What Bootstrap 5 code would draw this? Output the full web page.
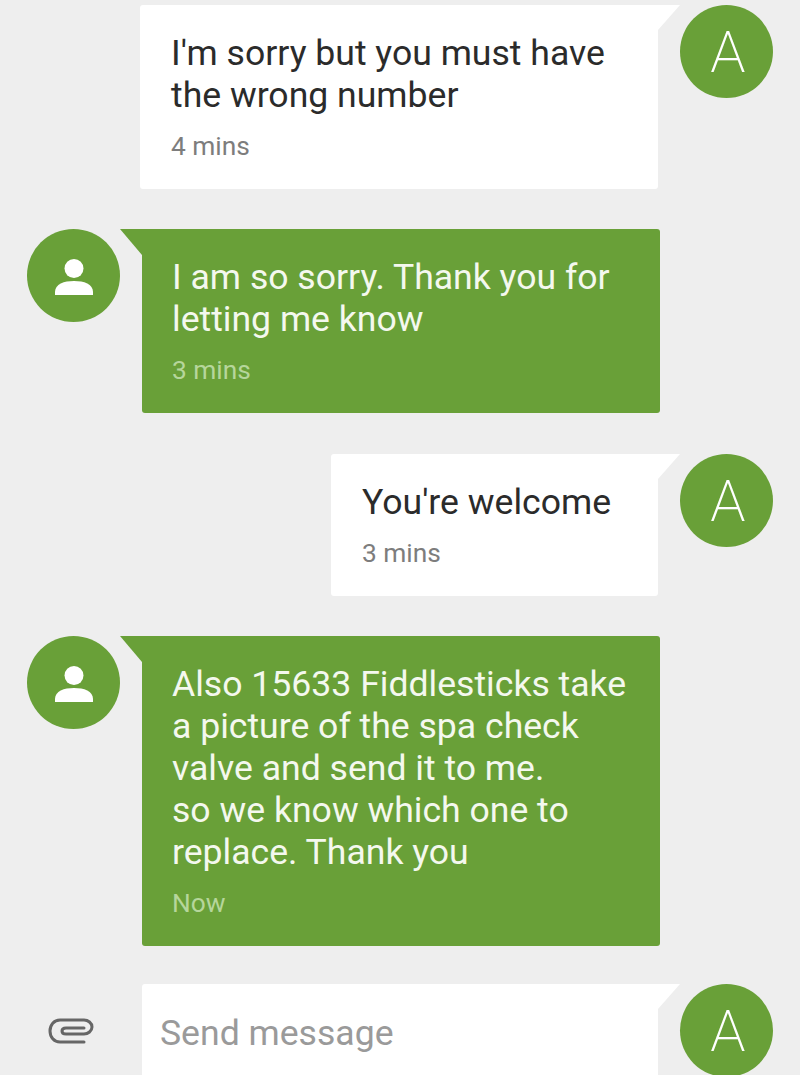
<!DOCTYPE html>
<html lang="en">
<head>
<meta charset="utf-8">
<title>Messages</title>
<link href="https://cdn.jsdelivr.net/npm/bootstrap@5.3.0/dist/css/bootstrap.min.css" rel="stylesheet">
<style>
html,body{height:1075px;overflow:hidden}
body{background:#eeeeee;font-family:Roboto,"Liberation Sans",sans-serif;color:#2b2b2b}
.chat{padding:5px 27px 0 27px;gap:40px}
.avatar-dot{width:93px;height:93px;background:#69a038;color:#fff;font-weight:200;font-size:58px;line-height:1;padding-left:3px}
.avatar-dot.plain{padding-left:0}
.person-icon{margin-top:4px}
.bubble{position:relative;padding:26.5px 31px 28.5px;font-size:35.6px;line-height:42px;border-radius:3px}
.bubble-in{background:#fff;margin-right:22px;border-top-right-radius:0}
.bubble-in::after{content:"";position:absolute;left:100%;top:0;border-top:25px solid #fff;border-right:22px solid transparent}
.bubble-out{background:#69a038;color:#f4f8ee;margin-left:22px;border-top-left-radius:0;padding-left:30px}
.bubble-out::before{content:"";position:absolute;right:100%;top:0;border-top:26px solid #69a038;border-left:22px solid transparent}
.w-long{width:518px}
.w-short{width:327px}
.row-shifted{margin-top:1px}
.stamp{font-size:26.3px;line-height:30px;margin-top:15px;color:#7d7d7d}
.bubble-out .stamp{color:#b6d69b}
.composer{margin-top:-2px;height:91px}
.clip-icon{margin-left:21px;margin-top:2px}
.field{width:518px;height:91px;color:#9a9a9a;margin-left:48px}
.field.bubble{padding:8px 18px 0;line-height:83px;border-bottom-left-radius:0;border-bottom-right-radius:0}
</style>
</head>
<body>
<main class="chat d-flex flex-column">
  <div class="d-flex justify-content-end align-items-start">
    <div class="bubble bubble-in w-long">
      <div>I'm sorry but you must have<br>the wrong number</div>
      <div class="stamp">4 mins</div>
    </div>
    <div class="avatar-dot rounded-circle d-flex align-items-center justify-content-center flex-shrink-0">A</div>
  </div>
  <div class="d-flex align-items-start">
    <div class="avatar-dot plain rounded-circle d-flex align-items-center justify-content-center flex-shrink-0">
      <svg class="person-icon" width="38" height="38" viewBox="0 0 38 38" fill="#fff"><circle cx="19" cy="9.5" r="9.5"/><path d="M0 33c0-8 9-11 19-11s19 3 19 11v3H0z"/></svg>
    </div>
    <div class="bubble bubble-out w-long">
      <div>I am so sorry. Thank you for<br>letting me know</div>
      <div class="stamp">3 mins</div>
    </div>
  </div>
  <div class="row-shifted d-flex justify-content-end align-items-start">
    <div class="bubble bubble-in w-short">
      <div>You're welcome</div>
      <div class="stamp">3 mins</div>
    </div>
    <div class="avatar-dot rounded-circle d-flex align-items-center justify-content-center flex-shrink-0">A</div>
  </div>
  <div class="d-flex align-items-start">
    <div class="avatar-dot plain rounded-circle d-flex align-items-center justify-content-center flex-shrink-0">
      <svg class="person-icon" width="38" height="38" viewBox="0 0 38 38" fill="#fff"><circle cx="19" cy="9.5" r="9.5"/><path d="M0 33c0-8 9-11 19-11s19 3 19 11v3H0z"/></svg>
    </div>
    <div class="bubble bubble-out w-long">
      <div>Also 15633 Fiddlesticks take<br>a picture of the spa check<br>valve and send it to me.<br>so we know which one to<br>replace. Thank you</div>
      <div class="stamp">Now</div>
    </div>
  </div>
  <div class="composer d-flex align-items-start">
    <svg class="clip-icon flex-shrink-0 align-self-center" width="46" height="26" viewBox="0 0 46 26" fill="none" stroke="#666" stroke-width="3" stroke-linecap="round"><path d="M36 24H12C6 24 2 19 2 13S6 2 12 2h24c4 0 8 3 8 7s-4 7-8 7H18c-2 0-4-1-4-3s2-3 4-3h18"/></svg>
    <div class="bubble bubble-in field">Send message</div>
    <div class="avatar-dot rounded-circle d-flex align-items-center justify-content-center flex-shrink-0">A</div>
  </div>
</main>
<script src="https://cdn.jsdelivr.net/npm/bootstrap@5.3.0/dist/js/bootstrap.bundle.min.js"></script>
</body>
</html>
